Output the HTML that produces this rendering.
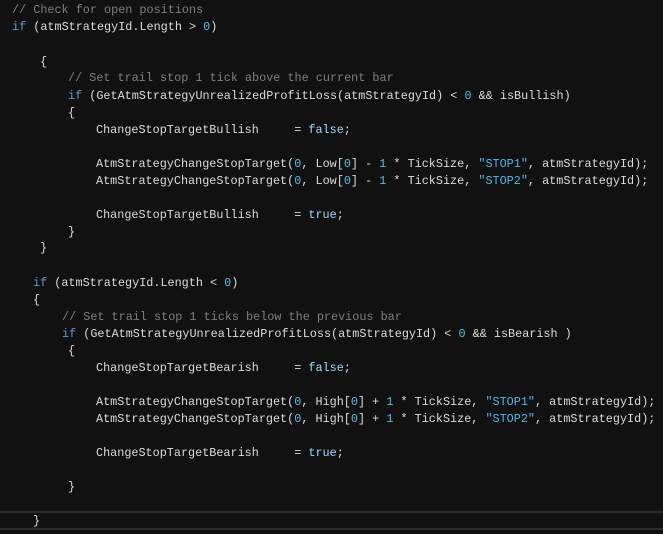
<!DOCTYPE html>
<html><head><style>
body{margin:0;background:#111111;width:663px;height:534px;overflow:hidden;position:relative;font-family:"Liberation Mono",monospace;font-size:11.8px;color:#dcdcdc}
.l{position:absolute;white-space:pre;line-height:17px}
.k{color:#569cd6}.c{color:#7f7f7f}.n{color:#4fc1e9}.s{color:#4fb8e8}.b{color:#9cdcfe}
.hl{position:absolute;left:0;top:511px;width:663px;height:15px;border-top:2px solid #2b2b2b;border-bottom:2px solid #2b2b2b}
</style></head><body>
<div class="hl"></div>
<div class="l c" style="left:12px;top:2px">// Check for open positions</div>
<div class="l" style="left:12px;top:19px"><span class="k">if</span> (atmStrategyId.Length &gt; <span class="n">0</span>)</div>
<div class="l" style="left:40px;top:54px">{</div>
<div class="l c" style="left:68px;top:70px">// Set trail stop 1 tick above the current bar</div>
<div class="l" style="left:68px;top:88px"><span class="k">if</span> (GetAtmStrategyUnrealizedProfitLoss(atmStrategyId) &lt; <span class="n">0</span> &amp;&amp; isBullish)</div>
<div class="l" style="left:68px;top:105px">{</div>
<div class="l" style="left:96px;top:122px">ChangeStopTargetBullish     = <span class="b">false</span>;</div>
<div class="l" style="left:96px;top:156px">AtmStrategyChangeStopTarget(<span class="n">0</span>, Low[<span class="n">0</span>] - <span class="n">1</span> * TickSize, <span class="s">"STOP1"</span>, atmStrategyId);</div>
<div class="l" style="left:96px;top:173px">AtmStrategyChangeStopTarget(<span class="n">0</span>, Low[<span class="n">0</span>] - <span class="n">1</span> * TickSize, <span class="s">"STOP2"</span>, atmStrategyId);</div>
<div class="l" style="left:96px;top:207px">ChangeStopTargetBullish     = <span class="b">true</span>;</div>
<div class="l" style="left:68px;top:224px">}</div>
<div class="l" style="left:40px;top:240px">}</div>
<div class="l" style="left:33px;top:275px"><span class="k">if</span> (atmStrategyId.Length &lt; <span class="n">0</span>)</div>
<div class="l" style="left:33px;top:292px">{</div>
<div class="l c" style="left:62px;top:309px">// Set trail stop 1 ticks below the previous bar</div>
<div class="l" style="left:62px;top:326px"><span class="k">if</span> (GetAtmStrategyUnrealizedProfitLoss(atmStrategyId) &lt; <span class="n">0</span> &amp;&amp; isBearish )</div>
<div class="l" style="left:68px;top:343px">{</div>
<div class="l" style="left:96px;top:360px">ChangeStopTargetBearish     = <span class="b">false</span>;</div>
<div class="l" style="left:96px;top:394px">AtmStrategyChangeStopTarget(<span class="n">0</span>, High[<span class="n">0</span>] + <span class="n">1</span> * TickSize, <span class="s">"STOP1"</span>, atmStrategyId);</div>
<div class="l" style="left:96px;top:411px">AtmStrategyChangeStopTarget(<span class="n">0</span>, High[<span class="n">0</span>] + <span class="n">1</span> * TickSize, <span class="s">"STOP2"</span>, atmStrategyId);</div>
<div class="l" style="left:96px;top:445px">ChangeStopTargetBearish     = <span class="b">true</span>;</div>
<div class="l" style="left:68px;top:479px">}</div>
<div class="l" style="left:33px;top:513px">}</div>
</body></html>
